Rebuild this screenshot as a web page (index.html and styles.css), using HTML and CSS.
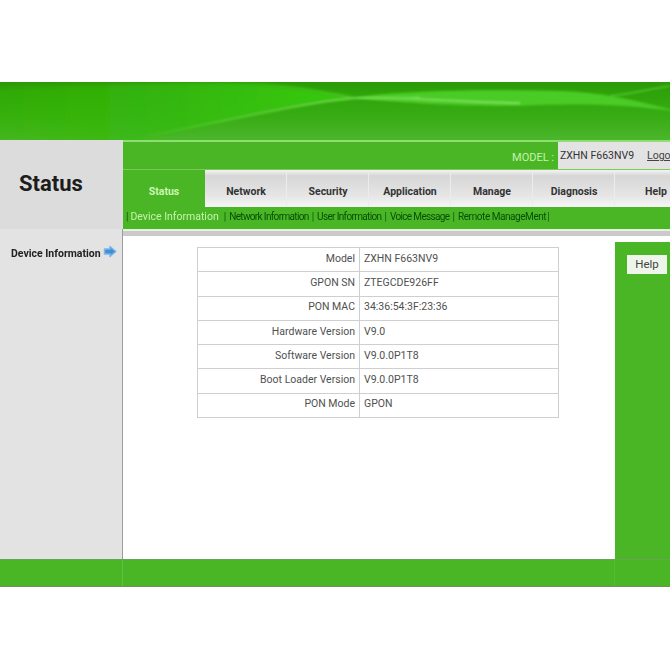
FILE: index.html
```html
<!DOCTYPE html>
<html lang="en">
<head>
<meta charset="utf-8">
<title>Status</title>
<link rel="stylesheet" href="styles.css">
</head>
<body>
<div class="page">
  <header class="banner">
    <svg class="waves" viewBox="0 0 670 58" preserveAspectRatio="none" aria-hidden="true">
      <defs>
        <filter id="soft" x="-5%" y="-20%" width="110%" height="140%"><feGaussianBlur stdDeviation="1.200"/></filter>
        <filter id="softer" x="-5%" y="-20%" width="110%" height="140%"><feGaussianBlur stdDeviation="2"/></filter>
        <linearGradient id="bright" x1="0" y1="0" x2="1" y2="0">
          <stop offset="0" stop-color="#34b80c" stop-opacity=".3"/>
          <stop offset=".5" stop-color="#35bb0a" stop-opacity=".8"/>
          <stop offset="1" stop-color="#38cc08" stop-opacity="1"/>
        </linearGradient>
        <linearGradient id="low" x1="0" y1="0" x2="1" y2="0">
          <stop offset="0" stop-color="#86e468" stop-opacity="0"/>
          <stop offset=".5" stop-color="#86e468" stop-opacity=".7"/>
          <stop offset="1" stop-color="#86e468" stop-opacity=".9"/>
        </linearGradient>
        <linearGradient id="high" x1="0" y1="0" x2="1" y2="0">
          <stop offset="0" stop-color="#60d83a" stop-opacity="0"/>
          <stop offset="1" stop-color="#70e04c" stop-opacity=".9"/>
        </linearGradient>
      </defs>
      <path d="M-10 6C100 2 200 0 240 1C290 3 320 10 355 16C300 20 200 45 130 60H-10Z" fill="url(#bright)" filter="url(#softer)"/>
      <path d="M355 16C390 9 480 7 560 9C600 10 640 19 680 30C640 24 600 21 540 23C480 26 400 21 355 16Z" fill="#4ccb26" filter="url(#soft)"/>
      <g filter="url(#soft)">
        <path d="M130 57C200 45 300 20 355 16C400 14 450 20 520 21" fill="none" stroke="url(#low)" stroke-width="2"/>
        <path d="M240 1C290 3 320 10 355 16C380 17 400 17 420 15" fill="none" stroke="url(#high)" stroke-width="1.500"/>
        <path d="M610 14C630 12 650 7 670 4" fill="none" stroke="#62d83c" stroke-opacity=".7" stroke-width="1.500"/>
      </g>
    </svg>
  </header>

  <section class="top">
    <div class="title-box"><h1 class="title">Status</h1></div>
    <div class="nav">
      <div class="model-bar">
        <span class="model-label">MODEL :</span>
        <div class="model-box">
          <span class="model-value">ZXHN F663NV9</span>
          <a class="logout">Logout</a>
        </div>
      </div>
      <nav class="tabs">
        <a class="tab tab-active">Status</a>
        <a class="tab">Network</a>
        <a class="tab">Security</a>
        <a class="tab">Application</a>
        <a class="tab">Manage</a>
        <a class="tab">Diagnosis</a>
        <a class="tab">Help</a>
      </nav>
      <div class="submenu">
        <span class="sep sep-first">|</span><a class="sub sub-active">Device Information</a>
        <span class="sep">|</span><a class="sub">Network Information</a>
        <span class="sep">|</span><a class="sub">User Information</a>
        <span class="sep">|</span><a class="sub">Voice Message</a>
        <span class="sep">|</span><a class="sub sub-wide">Remote ManageMent</a>
        <span class="sep">|</span>
      </div>
    </div>
  </section>

  <section class="middle">
    <aside class="side">
      <a class="side-link">Device Information</a>
      <svg class="arrow" width="14" height="13" viewBox="0 0 14 13" aria-hidden="true">
        <path d="M1.500 4H7V1.500L12.800 6.500 7 11.500V9H1.500Z" fill="#3f8fd8" stroke="#7fb5e6" stroke-width="1.500" stroke-linejoin="round"/>
      </svg>
    </aside>
    <div class="main-area">
      <div class="strip"></div>
      <div class="main-row">
        <main class="content">
          <table class="info">
            <tr><th>Model</th><td>ZXHN F663NV9</td></tr>
            <tr><th>GPON SN</th><td>ZTEGCDE926FF</td></tr>
            <tr><th>PON MAC</th><td>34:36:54:3F:23:36</td></tr>
            <tr><th>Hardware Version</th><td>V9.0</td></tr>
            <tr><th>Software Version</th><td>V9.0.0P1T8</td></tr>
            <tr><th>Boot Loader Version</th><td>V9.0.0P1T8</td></tr>
            <tr><th>PON Mode</th><td>GPON</td></tr>
          </table>
        </main>
        <aside class="help-panel">
          <button class="help-btn" type="button">Help</button>
        </aside>
      </div>
    </div>
  </section>

  <footer class="footer">
    <div class="foot-left"></div>
    <div class="foot-mid"></div>
    <div class="foot-right"></div>
  </footer>
</div>
</body>
</html>
```

FILE: styles.css
```css
* { box-sizing: border-box; }
html, body { margin: 0; padding: 0; background: #fff; }
body { font-family: Roboto, "Liberation Sans", sans-serif; color: #333; overflow: hidden; }
.page { width: 670px; padding-top: 82px; filter: blur(.35px); }

.banner {
  height: 58px;
  background: linear-gradient(180deg, #2a9a08 0%, #2fa40a 22%, #38ac14 60%, #4bb62c 100%);
  overflow: hidden;
}
.waves { display: block; width: 100%; height: 100%; }

.top { display: flex; height: 89px; }
.title-box {
  width: 123px;
  flex: none;
  background: #dcdcdc;
  padding: 31px 0 0 19px;
}
.title { margin: 0; font-size: 22px; line-height: 26px; font-weight: 700; color: #1c1c1c; }

.nav {
  flex: 1;
  min-width: 0;
  background: #4ab626;
  border-top: 2px solid #8fdf70;
  display: flex;
  flex-direction: column;
}
.model-bar { height: 28px; flex: none; display: flex; justify-content: flex-end; border-bottom: 1px solid #78cb58; }
.model-label { color: #c4f4ac; font-size: 11px; line-height: 31px; margin-right: 4px; }
.model-box { width: 112px; background: #e3e3e3; padding-left: 2px; display: flex; white-space: nowrap; overflow: hidden; }
.model-value { font-size: 10.500px; line-height: 27px; color: #333; }
.logout { font-size: 10.500px; line-height: 27px; margin-left: 13px; color: #444; text-decoration: underline; }

.tabs { display: flex; height: 37px; flex: none; overflow: hidden; }
.tab {
  width: 82px;
  flex: none;
  text-align: center;
  font-size: 10.500px;
  font-weight: 700;
  line-height: 43px;
  color: #333;
  background: linear-gradient(180deg, #f4f4f4 0%, #d6d6d6 16%, #e6e6e6 70%, #f6f6f6 100%);
  box-shadow: inset -1px 0 0 #ececec;
}
.tab-active { color: #cdf5b4; background: #4ab626; box-shadow: none; }

.submenu {
  flex: 1;
  display: flex;
  align-items: center;
  white-space: nowrap;
  padding: 0 0 3px 3px;
  font-size: 10px;
}
.sep { margin-right: 3px; font-size: 10px; color: #0b5a0b; }
.sep-first { margin-right: 2px; }
.sub { color: #064f06; letter-spacing: -.65px; margin-right: 3px; }
.sub-wide { letter-spacing: -.45px; margin-right: 1px; }
.sub-active { color: #c5f2ac; letter-spacing: 0; font-size: 10.500px; margin-right: 5px; }

.middle { display: flex; height: 330px; }
.side {
  width: 123px;
  flex: none;
  background: #e4e3e3;
  border-right: 1px solid #9c9c9c;
  padding: 17px 0 0 11px;
  display: flex;
  align-items: flex-start;
  gap: 2px;
}
.side-link { font-size: 10.500px; font-weight: 700; line-height: 15px; color: #222; white-space: nowrap; }
.arrow { flex: none; margin-top: -1px; }

.main-area { flex: 1; min-width: 0; display: flex; flex-direction: column; }
.strip { height: 7px; flex: none; background: #c9cac9; border-top: 2px solid #e6f3de; }
.main-row { flex: 1; display: flex; min-height: 0; background: #fff; }
.content { flex: 1; min-width: 0; padding: 11px 0 0 74px; }
.info { width: 362px; border-collapse: collapse; table-layout: fixed; font-size: 10.500px; color: #505050; }
.info th, .info td { height: 24.300px; border: 1px solid #cfcfcf; font-weight: 400; padding: 0 0 3px; }
.info th { width: 162px; text-align: right; padding-right: 4px; }
.info td { padding-left: 4px; }

.help-panel {
  width: 55px;
  flex: none;
  margin-top: 6px;
  background: #4ab626;
  padding: 13px 0 0 12px;
}
.help-btn {
  display: block;
  width: 40px;
  height: 19px;
  border: 0;
  background: #f0f5ec;
  font: 400 11.500px/19px Roboto, "Liberation Sans", sans-serif;
  color: #444;
  padding: 0;
}

.footer { display: flex; height: 28px; background: #4ab626; border-top: 1px solid #6aa354; border-bottom: 1px solid #6f8f62; }
.foot-left { width: 123px; border-right: 1px solid #63c042; }
.foot-mid { flex: 1; border-right: 1px solid #55bb33; }
.foot-right { width: 55px; }
```
